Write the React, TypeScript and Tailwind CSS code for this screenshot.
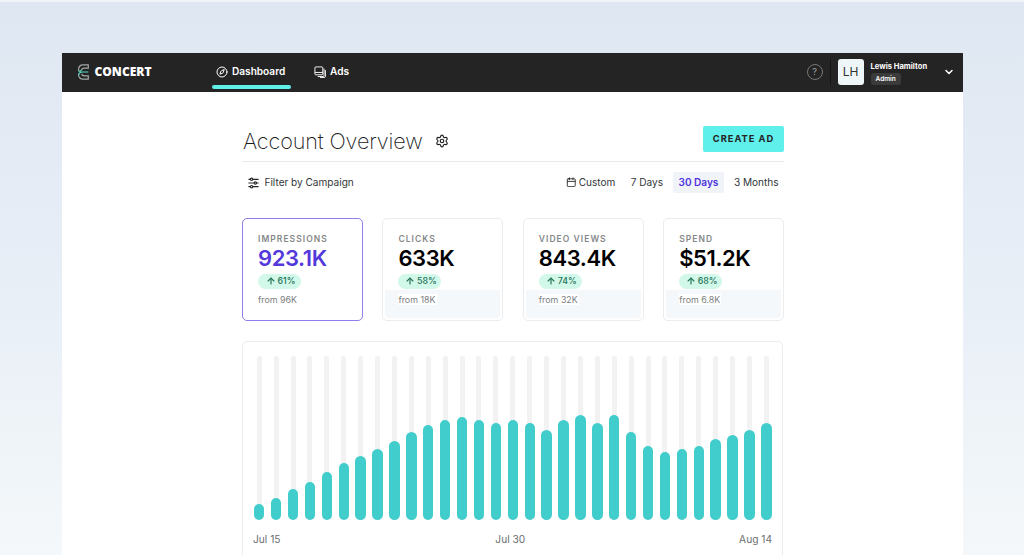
import { ArrowUp, Calendar, ChevronDown, Compass, Settings } from "lucide-react";

const stats = [
  { label: "IMPRESSIONS", value: "923.1K", change: "61%", from: "96K", active: true },
  { label: "CLICKS", value: "633K", change: "58%", from: "18K", active: false },
  { label: "VIDEO VIEWS", value: "843.4K", change: "74%", from: "32K", active: false },
  { label: "SPEND", value: "$51.2K", change: "68%", from: "6.8K", active: false },
];

// Daily bar heights in pixels, Jul 15 - Aug 14
const bars = [
  16, 21.5, 31, 37.5, 47.5, 56.5, 63.5, 71, 78.5, 87.5, 94.5, 99.5, 102.5, 99.5,
  96.5, 99.5, 96.5, 89.5, 99.5, 104.5, 96.5, 104.5, 87.5, 73.5, 67.5, 71, 73.5,
  81, 84.5, 89.5, 96.5,
];

function Logo() {
  return (
    <svg width="13" height="18" viewBox="0 0 13 18" fill="none" strokeWidth="1.2">
      <path d="M1.6 8V6A4.2 4.2 0 0 1 5.8 1.8H11.3V5.2H7.3Q5 5.2 4.6 7" stroke="#a3a8a8" />
      <path d="M1.6 11V12A4.2 4.2 0 0 0 5.8 16.2H11.3V12.8H7.3Q5 12.8 4.6 11" stroke="#a3a8a8" />
      <path d="M1.6 12.2C1.6 10 3.4 9 5.6 9H11.3M1.6 8.4Q4 8.6 4.6 6.6" stroke="#5bdcc6" />
    </svg>
  );
}

function AdsIcon() {
  return (
    <svg width="12" height="12" viewBox="0 0 13 13" fill="none" stroke="white" strokeWidth="1" strokeLinejoin="round">
      <rect x="1" y="1" width="8.5" height="8.5" rx="0.8" />
      <path d="M1 7H9.5M10.9 2.8V10.3Q10.9 11.4 9.8 11.4H4M12.4 4.5V11Q12.4 12.5 10.9 12.5H6.5" />
    </svg>
  );
}

function FilterIcon() {
  return (
    <svg width="11" height="12" viewBox="0 0 12 12" fill="none" stroke="#242424" strokeWidth="1.3">
      <path d="M0.5 2H2.5M5.5 2H11.5M0.5 6H6.5M9.5 6H11.5M0.5 10H2.5M5.5 10H11.5" />
      <circle cx="4" cy="2" r="1.3" />
      <circle cx="8" cy="6" r="1.3" />
      <circle cx="4" cy="10" r="1.3" />
    </svg>
  );
}

function Header() {
  return (
    <header className="flex h-[39px] items-center bg-[#242424] text-white">
      <div className="flex w-[150px] items-center pl-[15px]">
        <Logo />
        <svg width="60" height="16" className="ml-[3px]">
          <text
            x="1.5"
            y="12"
            textLength="57"
            lengthAdjust="spacingAndGlyphs"
            fill="white"
            className="font-['Open_Sans',sans-serif] text-[12px] font-extrabold"
          >
            CONCERT
          </text>
        </svg>
      </div>
      <nav className="flex h-full text-[10.1px] font-semibold">
        <div className="flex h-full w-[79px] flex-col">
          <div className="flex flex-1 items-center gap-[4px] pt-[6px] pl-[4.5px]">
            <Compass size={12} strokeWidth={2} />
            Dashboard
          </div>
          <div className="mb-[3px] h-[4px] rounded-full bg-[#5ff0ec]" />
        </div>
        <div className="ml-[23.5px] flex items-center gap-[4px]">
          <AdsIcon />
          Ads
        </div>
      </nav>
      <div className="ml-auto flex h-full items-center">
        <div className="flex size-4 items-center justify-center rounded-full border border-[#777] text-[9px] font-medium text-[#999]">
          ?
        </div>
        <div className="ml-[7px] h-[26px] w-px bg-[#151515]" />
        <div className="ml-[7px] flex size-[26px] items-center justify-center rounded-[3px] bg-[#eef6f8] text-[12px] text-[#333]">
          LH
        </div>
        <div className="ml-[7px] flex w-[72px] flex-col items-start pt-px">
          <span className="text-[7.6px] leading-[11px] font-bold whitespace-nowrap">Lewis Hamilton</span>
          <span className="mt-px rounded-[3px] bg-[#3b3b3b] px-[5px] text-[6.5px] leading-[12px] font-semibold">Admin</span>
        </div>
        <ChevronDown size={12} strokeWidth={3} className="mr-[8px]" />
      </div>
    </header>
  );
}

function StatCard({ label, value, change, from, active }: (typeof stats)[number]) {
  return (
    <div
      className={`h-[103.5px] rounded-[5px] border p-[2px] ${active ? "border-[#8e80ec]" : "border-[#ebeced]"}`}
    >
      <div
        className={`h-full rounded-[3px] pt-[13px] pl-[13px] ${active ? "" : "bg-linear-to-b from-white from-[69px] to-[#f5f8fa] to-[69px]"}`}
      >
        <div className="text-[8.5px] leading-[11px] font-semibold tracking-[1.05px] text-[#858889]">{label}</div>
        <div
          className={`mt-[0.5px] text-[22px] leading-[26px] font-semibold tracking-[-0.4px] ${active ? "text-[#5338dc]" : "text-black"}`}
        >
          {value}
        </div>
        <div className="mt-[2.5px] flex h-[15px] w-[43px] items-center justify-center gap-[2px] rounded-full bg-[#d2f8e9] pl-[2px] text-[8.8px] font-medium text-[#24735a]">
          <ArrowUp size={10} strokeWidth={2.8} />
          {change}
        </div>
        <div className="mt-[5px] text-[8.9px] leading-[12px] text-[#7b7e80]">
          <span className="bg-white pr-px">from {from}</span>
        </div>
      </div>
    </div>
  );
}

function Chart() {
  return (
    <div className="mt-[20px] h-[240px] w-[541px] rounded-[5px] border border-[#ececec] pt-[14px] pr-[10px] pl-[11px]">
      <div className="flex h-[163.5px] justify-between">
        {bars.map((height, i) => (
          <div key={i} className="relative flex w-[10.4px] items-end justify-center">
            <div className="h-full w-[5px] rounded-full bg-[#f2f2f2]" />
            <div
              className="absolute bottom-0 w-full rounded-full bg-[#41cdcb]"
              style={{ height }}
            />
          </div>
        ))}
      </div>
      <div className="mt-[12.5px] flex justify-between text-[10.2px] leading-[14px] text-[#6b6e70]">
        <span className="-ml-px">Jul 15</span>
        <span className="ml-px">Jul 30</span>
        <span>Aug 14</span>
      </div>
    </div>
  );
}

export default function App() {
  return (
    <div className="h-[555px] w-[1024px] overflow-hidden border-t-2 border-[#f0f4f8] bg-linear-to-b from-[#dfe7f2] via-[#e9eff7] via-55% to-[#f4f8fa] pt-[50.5px] pl-[61.5px] font-['Inter',sans-serif]">
      <div className="h-[510px] w-[901px] bg-white">
        <Header />
        <main className="ml-[180.5px] w-[542px]">
          <div className="flex h-[70px] items-center border-b border-[#e9e9eb] pt-[26px]">
            <h1 className="ml-px pt-[3px] text-[21.6px] leading-[30px] font-extralight tracking-[-0.12px] text-[#1c1c1c]">
              Account Overview
            </h1>
            <Settings size={14} className="mt-[3px] ml-[12px] text-[#242424]" />
            <button className="ml-auto h-[26px] w-[81px] rounded-[2px] bg-[#5ff0ec] text-[9.3px] font-bold tracking-[1px] text-[#242424]">
              CREATE AD
            </button>
          </div>
          <div className="flex h-[42px] items-center text-[10.05px] text-[#343638]">
            <div className="flex items-center gap-[5.5px] pl-[6px]">
              <FilterIcon />
              Filter by Campaign
            </div>
            <div className="ml-auto flex items-center">
              <Calendar size={10.5} strokeWidth={2.2} className="-mt-px" />
              <span className="ml-[2px]">Custom</span>
              <span className="ml-[15.5px]">7 Days</span>
              <span className="ml-[10px] rounded-[2px] bg-[#f0f4f9] px-[5.5px] leading-[21px] font-semibold text-[#4f35df]">
                30 Days
              </span>
              <span className="mr-[5.5px] ml-[10px]">3 Months</span>
            </div>
          </div>
          <div className="mt-[14px] grid grid-cols-4 gap-[19.6px]">
            {stats.map((stat) => (
              <StatCard key={stat.label} {...stat} />
            ))}
          </div>
          <Chart />
        </main>
      </div>
    </div>
  );
}
